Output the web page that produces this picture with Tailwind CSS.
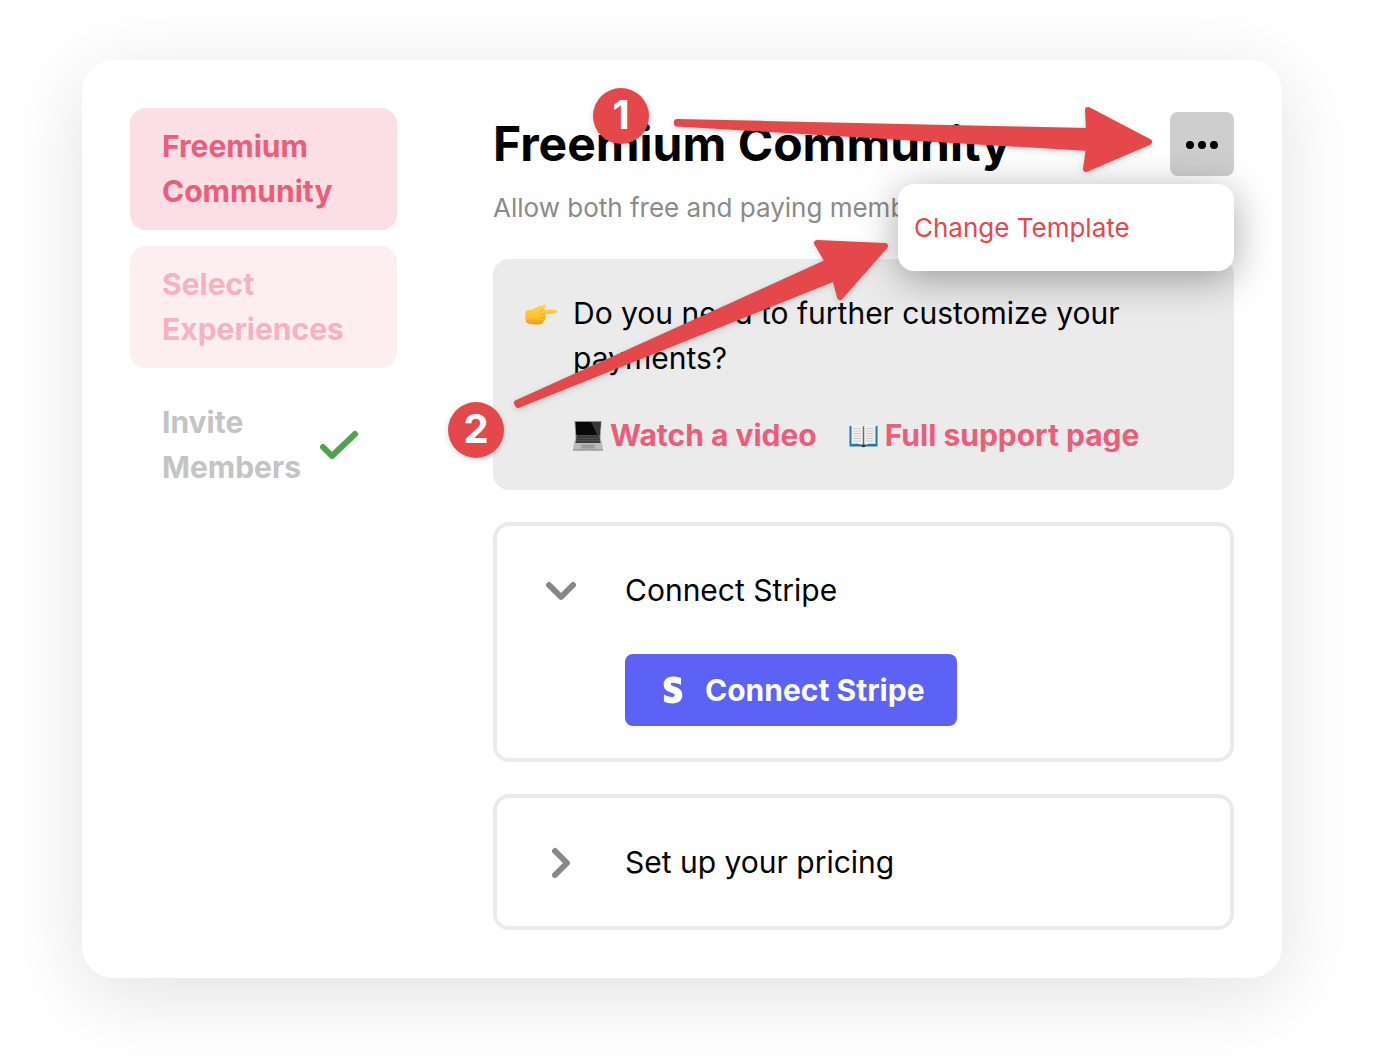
<!DOCTYPE html>
<html lang="en">
<head>
    <meta charset="UTF-8">
    <meta name="viewport" content="width=device-width, initial-scale=1.0">
    <title>Freemium Community</title>
    <script src="https://cdn.jsdelivr.net/npm/@tailwindcss/browser@4"></script>
</head>
<body class="bg-white text-black font-['Inter',sans-serif] text-[30px] leading-[45px]">

    <div class="pt-[60px] pr-[104px] pb-[82px] pl-[82px]">
        <div class="relative flex items-start gap-24 rounded-[32px] bg-white p-12 shadow-[0_16px_80px_rgba(0,0,0,0.12)]">

            <!-- Steps -->
            <nav class="flex w-[267px] shrink-0 flex-col gap-4 font-bold">
                <a href="#" class="rounded-2xl bg-[#fbdfe4] px-8 py-4 text-[#ea5e7a]">Freemium Community</a>
                <a href="#" class="rounded-2xl bg-[#fdeff1] px-8 py-4 text-[#f5b2c0]">Select Experiences</a>
                <a href="#" class="flex items-center gap-4 rounded-2xl px-8 py-4 text-[#c4c4c4]">
                    <span class="w-[140px]">Invite Members</span>
                    <svg class="h-10 w-12 shrink-0" viewBox="0 0 48 40" fill="none" stroke="#50a44f" stroke-width="6" stroke-linecap="round" stroke-linejoin="round">
                        <path d="M6 22L15 31L38 9" />
                    </svg>
                </a>
            </nav>

            <!-- Main content -->
            <main class="min-w-0 flex-1 pt-1">
                <header class="relative mb-8">
                    <div class="flex h-16 items-center justify-between">
                        <h1 class="text-5xl font-bold">Freemium Community</h1>
                        <button type="button" aria-label="More options" class="flex size-16 items-center justify-center rounded-lg bg-[#cecece]">
                            <svg class="h-4 w-8" viewBox="0 0 32 16" fill="#000">
                                <circle cx="4" cy="9" r="4" />
                                <circle cx="16" cy="9" r="4" />
                                <circle cx="28" cy="9" r="4" />
                            </svg>
                        </button>
                    </div>
                    <p class="mt-3 text-[26px] leading-[39px] text-[#8a8a8a]">Allow both free and paying members</p>

                    <!-- Options menu -->
                    <div class="absolute top-[72px] right-0 z-10 w-[336px] rounded-2xl bg-white p-4 shadow-[0_8px_40px_rgba(0,0,0,0.35)]">
                        <button type="button" class="block w-full py-2 text-left text-[26px] leading-[39px] text-[#e5484a]">Change Template</button>
                    </div>
                </header>

                <section class="flex gap-4 rounded-2xl bg-[#ebebeb] p-8">
                    <svg class="mt-2 size-8 shrink-0" viewBox="0 0 32 32">
                        <defs>
                            <linearGradient id="hand" x1="0" y1="0" x2="0" y2="1">
                                <stop offset="0" stop-color="#ffd84a" />
                                <stop offset=".65" stop-color="#fdbf2d" />
                                <stop offset="1" stop-color="#e89a1c" />
                            </linearGradient>
                        </defs>
                        <path d="M1 11.500C3 10.500 7 11.500 10 9C13 7 17 6.500 19.500 5.500C21.500 5.200 22 7.200 20.500 8.500L18 10.800L30 10.800C32.500 10.800 32.500 14.200 30 14.300L20 15.200C21.500 16 21.500 18 20 18.500C21 20 20 21.800 18.500 22C18.500 24.200 17 25.200 15 25.200C10 25.800 4 25.500 1.500 23.800C0 20 0 15 1 11.500Z" fill="url(#hand)" />
                        <path d="M20 15.200H16M20 18.500H16M18.500 22H15M18 10.800L15 13" fill="none" stroke="#e5a02a" stroke-width=".7" stroke-linecap="round" />
                    </svg>
                    <div>
                        <p>Do you need to further customize your payments?</p>
                        <div class="mt-8 flex gap-8 font-bold text-[#ea5e7a]">
                            <a href="#" class="flex items-center gap-[7px]">
                                <svg class="h-8 w-[30px] shrink-0" viewBox="0 0 30 32">
                                    <path d="M1.500 1H28.500L27.500 17H2.500Z" fill="#8c8c8c" />
                                    <path d="M2.500 2H27.500L26.700 15.500H3.300Z" fill="#080808" />
                                    <path d="M18 2H27.500L26.700 15.500H24.500Z" fill="#36383a" />
                                    <path d="M2.500 16H27.500L30 29V30.500H0V29Z" fill="#b9b9b9" />
                                    <path d="M3.500 16H26.500L27.500 23H2.500Z" fill="#3b3b3b" />
                                    <path d="M3.500 18.500H26.500M3.200 20.500H26.800" stroke="#666" stroke-width=".7" stroke-dasharray="1.500 .7" />
                                    <path d="M8.500 24.500H21.500L22 28.500H8Z" fill="#9a9a9a" />
                                    <path d="M0 29.500H30V30.500H0Z" fill="#8b8b8b" />
                                </svg>
                                Watch a video
                            </a>
                            <a href="#" class="flex items-center gap-[7px]">
                                <svg class="h-8 w-[29px] shrink-0" viewBox="0 0 29 32">
                                    <path d="M.5 6H28.500V26.500H16L14.500 27.500L13 26.500H.5Z" fill="#28789b" />
                                    <path d="M2.500 5.500C6 4.500 11 4.500 14.500 6.500C18 4.500 23 4.500 26.500 5.500V24C22 23.300 18 23.500 14.500 25.500C11 23.500 7 23.300 2.500 24Z" fill="#f1f0ee" />
                                    <path d="M4.500 8.500H12M4.500 11H12M4.500 13.500H12M4.500 16H12M4.500 18.500H12M4.500 21H12M17 8.500H24.500M17 11H24.500M17 13.500H24.500M17 16H24.500M17 18.500H24.500M17 21H24.500" stroke="#c4c4c4" stroke-width=".8" />
                                    <path d="M14.500 6.500V26" stroke="#6b6b6b" stroke-width="1.500" />
                                    <path d="M12.500 24.500H16.500V27H12.500Z" fill="#39402d" />
                                </svg>
                                Full support page
                            </a>
                        </div>
                    </div>
                </section>

                <section class="mt-8 rounded-2xl border-4 border-[#ebebeb] pb-8">
                    <button type="button" aria-expanded="true" class="flex h-32 w-full items-center gap-12 px-12 text-left">
                        <svg class="size-8 shrink-0" viewBox="0 0 32 32" fill="none" stroke="#888" stroke-width="6" stroke-linecap="round" stroke-linejoin="round">
                            <path d="M4 11L16 23L28 11" />
                        </svg>
                        Connect Stripe
                    </button>
                    <div class="pl-32">
                        <button type="button" class="flex h-[72px] items-center gap-4 rounded-lg bg-[#5c62f6] px-8 font-bold text-white">
                            <svg class="size-8 shrink-0" viewBox="0 0 32 32" fill="#fff">
                                <path d="M18 12.800C15.200 11.800 13.800 11.200 13.800 10.100C13.800 9.200 14.600 8.700 16 8.700C18.600 8.700 21.700 9.700 24 10.900V4.100C21.600 3.100 19 2.600 16.200 2.600C10.500 2.600 6.700 5.700 6.700 10.600C6.700 15.200 9.400 17 13.800 18.500C16.700 19.500 17.700 20.200 17.700 21.300C17.700 22.400 16.800 23 15.100 23C12.700 23 9.200 21.900 6.900 20.600V27.500C9.300 28.700 12.400 29.400 15.500 29.400C21.600 29.400 25.300 26.300 25.300 21C25.300 16.300 22.500 14.400 18 12.800Z" />
                            </svg>
                            Connect Stripe
                        </button>
                    </div>
                </section>

                <section class="mt-8 rounded-2xl border-4 border-[#ebebeb]">
                    <button type="button" aria-expanded="false" class="flex h-32 w-full items-center gap-12 px-12 text-left">
                        <svg class="size-8 shrink-0" viewBox="0 0 32 32" fill="none" stroke="#888" stroke-width="6" stroke-linecap="round" stroke-linejoin="round">
                            <path d="M10 5L22 17L10 29" />
                        </svg>
                        Set up your pricing
                    </button>
                </section>
            </main>

            <!-- Annotation arrows and step numbers -->
            <svg class="pointer-events-none absolute top-5 left-[348px] z-20 h-[390px] w-[740px] drop-shadow-[0_2px_3px_rgba(0,0,0,0.15)]" viewBox="430 80 740 390" fill="#e5484a" stroke="#e5484a" stroke-width="6" stroke-linejoin="round">
                <path d="M677 122L1089 131L1088 110L1149 142L1086 169L1089 148L677 123.500Z" />
                <path d="M517 403L828 262L817 243L885 246L840 297L835 278L518 405Z" />
            </svg>
            <span class="absolute top-7 left-[511px] z-20 flex size-14 items-center justify-center rounded-full bg-[#e5484a] pb-[3px] text-[40px] leading-none font-bold text-white shadow-[0_2px_6px_rgba(0,0,0,0.15)]">1</span>
            <span class="absolute top-[342px] left-[366px] z-20 flex size-14 items-center justify-center rounded-full bg-[#e5484a] pb-[3px] text-[40px] leading-none font-bold text-white shadow-[0_2px_6px_rgba(0,0,0,0.15)]">2</span>
        </div>
    </div>

</body>
</html>
